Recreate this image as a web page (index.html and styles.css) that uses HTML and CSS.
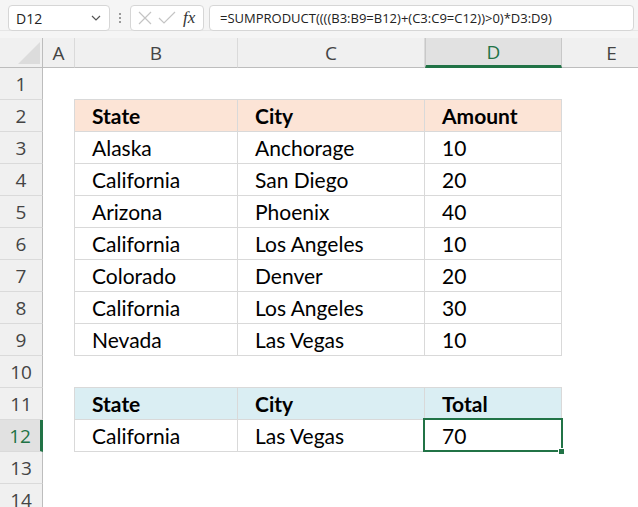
FILE: index.html
```html
<!DOCTYPE html>
<html lang="en">

<head>
    <meta charset="UTF-8">
    <meta name="viewport" content="width=device-width, initial-scale=1.0">
    <title>SUMPRODUCT OR</title>
    <link rel="stylesheet" href="styles.css">
</head>

<body>
    <div class="topbar">
        <div class="namebox">
            <span>D12</span>
            <svg class="chevron" width="10" height="6" viewBox="0 0 10 6"><path d="M1 1 L5 5 L9 1" fill="none" stroke="#555" stroke-width="1.2"/></svg>
        </div>
        <div class="grip"><i></i><i></i><i></i></div>
        <div class="fxbox">
            <svg width="16" height="16" viewBox="0 0 16 16"><path d="M2 2 L14 14 M14 2 L2 14" stroke="#c4c4c4" stroke-width="1.2"/></svg>
            <svg width="18" height="16" viewBox="0 0 18 16"><path d="M1 8 L6 13 L17 2" fill="none" stroke="#c4c4c4" stroke-width="1.2"/></svg>
            <span class="fx">fx</span>
        </div>
        <div class="formula">=SUMPRODUCT((((B3:B9=B12)+(C3:C9=C12))&gt;0)*D3:D9)</div>
    </div>
    <div class="gap"></div>

    <div class="sheet">
        <div class="colhead corner"><span class="tri"></span></div>
        <div class="colhead">A</div>
        <div class="colhead">B</div>
        <div class="colhead">C</div>
        <div class="colhead active">D</div>
        <div class="colhead">E</div>

        <div class="rowhead">1</div><div></div><div></div><div></div><div></div><div></div>

        <div class="rowhead">2</div><div></div>
        <div class="cell first top head peach">State</div>
        <div class="cell top head peach">City</div>
        <div class="cell top head peach">Amount</div><div></div>

        <div class="rowhead">3</div><div></div>
        <div class="cell first">Alaska</div><div class="cell">Anchorage</div><div class="cell">10</div><div></div>

        <div class="rowhead">4</div><div></div>
        <div class="cell first">California</div><div class="cell">San Diego</div><div class="cell">20</div><div></div>

        <div class="rowhead">5</div><div></div>
        <div class="cell first">Arizona</div><div class="cell">Phoenix</div><div class="cell">40</div><div></div>

        <div class="rowhead">6</div><div></div>
        <div class="cell first">California</div><div class="cell">Los Angeles</div><div class="cell">10</div><div></div>

        <div class="rowhead">7</div><div></div>
        <div class="cell first">Colorado</div><div class="cell">Denver</div><div class="cell">20</div><div></div>

        <div class="rowhead">8</div><div></div>
        <div class="cell first">California</div><div class="cell">Los Angeles</div><div class="cell">30</div><div></div>

        <div class="rowhead">9</div><div></div>
        <div class="cell first">Nevada</div><div class="cell">Las Vegas</div><div class="cell">10</div><div></div>

        <div class="rowhead">10</div><div></div><div></div><div></div><div></div><div></div>

        <div class="rowhead">11</div><div></div>
        <div class="cell first top head blue">State</div>
        <div class="cell top head blue">City</div>
        <div class="cell top head blue">Total</div><div></div>

        <div class="rowhead active">12</div><div></div>
        <div class="cell first">California</div><div class="cell">Las Vegas</div><div class="cell selected">70</div><div></div>

        <div class="rowhead">13</div><div></div><div></div><div></div><div></div><div></div>
        <div class="rowhead">14</div><div></div><div></div><div></div><div></div><div></div>
    </div>
</body>

</html>
```

FILE: styles.css
```css
body {
    margin: 0;
    width: 638px;
    height: 507px;
    overflow: hidden;
    background-color: #ffffff;
    font-family: "Lato", "Liberation Sans", sans-serif;
}

.topbar {
    height: 31px;
    display: flex;
    align-items: flex-start;
    padding: 5px 4px 0 8px;
    box-sizing: border-box;
    background-color: #f5f5f5;
    border-bottom: 1px solid #e6e6e6;
    font-family: "Open Sans", "Liberation Sans", sans-serif;
}

.gap {
    height: 7px;
    background-color: #f5f5f5;
}

.namebox {
    width: 102px;
    height: 26px;
    box-sizing: border-box;
    display: flex;
    align-items: center;
    justify-content: space-between;
    padding: 0 8px 0 7px;
    background-color: #ffffff;
    border: 1px solid #d6d6d6;
    border-radius: 4px;
    font-size: 14px;
    color: #222;
}

.grip {
    width: 20px;
    height: 26px;
    display: flex;
    flex-direction: column;
    align-items: center;
    justify-content: center;
    gap: 2px;
}

.grip i {
    width: 2px;
    height: 2px;
    background-color: #9a9a9a;
}

.fxbox {
    width: 74px;
    height: 26px;
    box-sizing: border-box;
    display: flex;
    align-items: center;
    gap: 5px;
    padding-left: 6px;
    background-color: #ffffff;
    border: 1px solid #d6d6d6;
    border-radius: 4px;
}

.fx {
    font-family: "Liberation Serif", serif;
    font-style: italic;
    font-size: 17px;
    color: #333;
    margin-left: 2px;
}

.formula {
    flex: 1;
    height: 26px;
    box-sizing: border-box;
    margin-left: 5px;
    padding-left: 10px;
    line-height: 24px;
    background-color: #ffffff;
    border: 1px solid #d6d6d6;
    border-radius: 4px;
    font-size: 13px;
    color: #222;
    white-space: nowrap;
    overflow: hidden;
}

.sheet {
    display: grid;
    grid-template-columns: 43px 32px 163px 187px 137px 100px;
    grid-template-rows: 30px;
    grid-auto-rows: 32px;
}

.colhead {
    box-sizing: border-box;
    background-color: #f0f0f0;
    border-bottom: 1px solid #bdbdbd;
    border-right: 1px solid #dadada;
    display: flex;
    align-items: center;
    justify-content: center;
    font-family: "Open Sans", "Liberation Sans", sans-serif;
    font-size: 19px;
    color: #444;
}

.colhead.corner {
    border-right: 1px solid #bdbdbd;
    position: relative;
}

.tri {
    position: absolute;
    right: 2px;
    bottom: 3px;
    width: 0;
    height: 0;
    border-left: 22px solid transparent;
    border-bottom: 22px solid #dcdcdc;
}

.colhead.active {
    background-color: #e1e1e1;
    border-bottom: 3px solid #217346;
    border-left: 1px solid #c8c8c8;
    border-right: 1px solid #c8c8c8;
    color: #217346;
}

.rowhead {
    box-sizing: border-box;
    background-color: #f0f0f0;
    border-right: 1px solid #bdbdbd;
    border-bottom: 1px solid #dadada;
    display: flex;
    align-items: center;
    justify-content: center;
    font-family: "Open Sans", "Liberation Sans", sans-serif;
    font-size: 19px;
    color: #444;
}

.rowhead.active {
    background-color: #e1e1e1;
    border-right: 3px solid #217346;
    color: #217346;
}

.cell {
    box-sizing: border-box;
    border-right: 1px solid #d9d9d9;
    border-bottom: 1px solid #d9d9d9;
    display: flex;
    align-items: center;
    padding: 0 0 0 17px;
    font-size: 21px;
    color: #000;
    white-space: nowrap;
}

.cell.first {
    box-shadow: -1px 0 0 #d9d9d9;
}

.cell.top {
    box-shadow: 0 -1px 0 #d9d9d9;
}

.cell.first.top {
    box-shadow: -1px 0 0 #d9d9d9, 0 -1px 0 #d9d9d9, -1px -1px 0 #d9d9d9;
}

.head {
    font-weight: bold;
}

.peach {
    background-color: #fce4d6;
}

.blue {
    background-color: #daeef3;
}

.selected {
    position: relative;
}

.selected::before {
    content: "";
    position: absolute;
    left: -2px;
    top: -2px;
    right: -2px;
    bottom: -1px;
    border: 2px solid #217346;
}

.selected::after {
    content: "";
    position: absolute;
    right: -4px;
    bottom: -4px;
    width: 5px;
    height: 5px;
    background-color: #217346;
    border: 1px solid #ffffff;
}
```
